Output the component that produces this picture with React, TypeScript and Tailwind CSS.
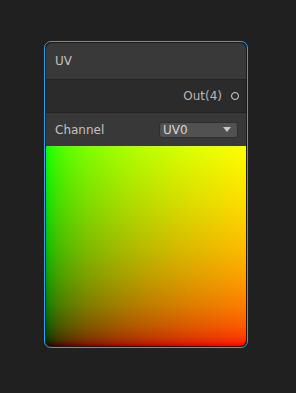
export default function App() {
  return (
    <div className="w-[296px] h-[393px] bg-[#202020] pt-[41px] pl-[44px] font-['DejaVu_Sans',sans-serif]">
      <div className="w-[204px] rounded-[7px] border border-[#3b9ee6] bg-[#191919] p-px">
        <div className="rounded-[6px] overflow-hidden">
          {/* title */}
          <div className="h-[36px] bg-[#393939] flex items-center pl-[9px] text-[12px] text-[#c2c2c2]">
            UV
          </div>
          <div className="h-px bg-[#232323]" />
          {/* output port */}
          <div className="h-[32px] bg-[#2b2b2b] flex items-center justify-end pr-[7px] text-[12px] text-[#b8b8b8]">
            <span>Out(4)</span>
            <span className="ml-[9px] w-[8px] h-[8px] rounded-full border-[1.5px] border-[#e6cdec]" />
          </div>
          <div className="h-px bg-[#232323]" />
          {/* channel row */}
          <div className="h-[33px] bg-[#383838] flex items-center justify-between pl-[9px] pr-[8px] text-[12px] text-[#c2c2c2]">
            <span>Channel</span>
            <div className="w-[79px] h-[16px] rounded-[3px] bg-[#515151] border border-[#2e2e2e] flex items-center justify-between pl-[3px] pr-[6px] text-[#d6d6d6]">
              <span className="leading-none">UV0</span>
              <svg width="8" height="5" viewBox="0 0 8 5">
                <path d="M0 0 L8 0 L4 5 Z" fill="#c8c8c8" />
              </svg>
            </div>
          </div>
          {/* preview: linear uv ramp shown in sRGB */}
          <div className="h-[200px] bg-blend-screen bg-[linear-gradient(to_right,#000_0%,#270000_2%,#3f0000_5%,#590000_10%,#7c0000_20%,#a00000_35%,#bc0000_50%,#da0000_70%,#f00_100%),linear-gradient(to_top,#000_0%,#002700_2%,#003f00_5%,#005900_10%,#007c00_20%,#00a000_35%,#00bc00_50%,#00da00_70%,#0f0_100%)]" />
        </div>
      </div>
    </div>
  );
}
